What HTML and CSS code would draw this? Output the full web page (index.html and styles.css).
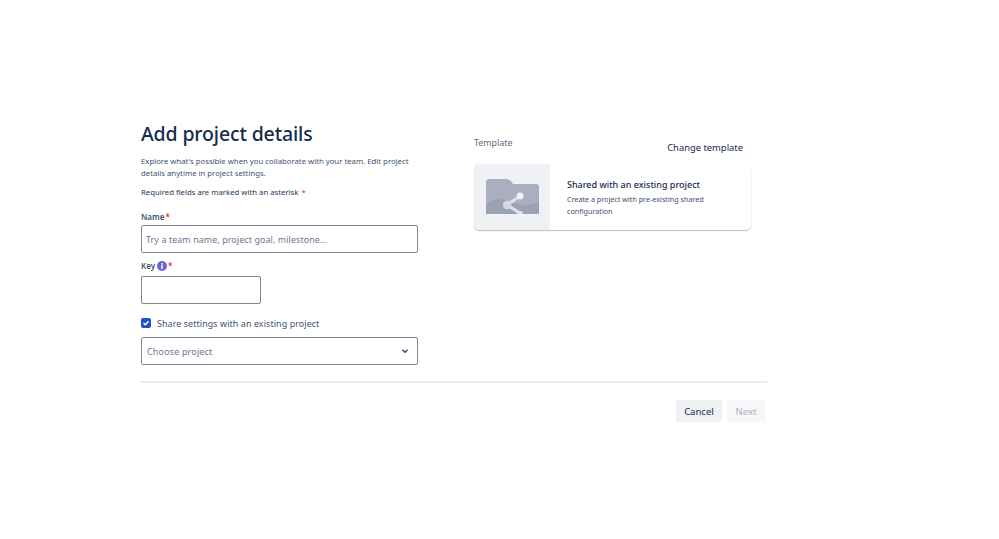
FILE: index.html
```html
<!DOCTYPE html>
<html lang="en">
<head>
<meta charset="utf-8">
<title>Add project details</title>
<link rel="stylesheet" href="styles.css">
</head>
<body>
<main class="page">
  <div class="columns">
    <form class="form">
      <h1 class="title">Add project details</h1>
      <p class="intro">Explore what's possible when you collaborate with your team. Edit project details anytime in project settings.</p>
      <p class="required">Required fields are marked with an asterisk <span class="star star-gap">*</span></p>
      <label class="label label-name">Name<span class="star">*</span></label>
      <div class="input input-wide"><span class="placeholder">Try a team name, project goal, milestone...</span></div>
      <div class="label label-key">Key
        <svg class="info" width="10" height="10" viewBox="0 0 10 10"><circle cx="5" cy="5" r="5" fill="#6f63d6"/><rect x="4.2" y="4.2" width="1.6" height="3.6" fill="#fff"/><rect x="4.2" y="2.2" width="1.6" height="1.4" fill="#fff"/></svg><span class="star">*</span>
      </div>
      <div class="input input-key"></div>
      <div class="check-row">
        <svg class="check" width="10" height="10" viewBox="0 0 10 10"><rect width="10" height="10" rx="2" fill="#2250c8"/><path d="M2.6 5.1 4.3 6.8 7.5 3.3" fill="none" stroke="#fff" stroke-width="1.4"/></svg>
        <span>Share settings with an existing project</span>
      </div>
      <div class="input input-wide select">
        <span class="placeholder placeholder-select">Choose project</span>
        <svg width="10" height="10" viewBox="0 0 10 10"><path d="M2.4 3.8 5 6.2 7.6 3.8" fill="none" stroke="#344563" stroke-width="1.4"/></svg>
      </div>
    </form>
    <section class="template">
      <div class="template-head">
        <span class="template-label">Template</span>
        <span class="change">Change template</span>
      </div>
      <div class="card">
        <div class="card-art">
          <svg width="53" height="35" viewBox="0 0 53 35">
            <path d="M0 3a3 3 0 0 1 3-3h17c3 0 5 2 7 5h23a3 3 0 0 1 3 3v27H0z" fill="#a9afbf"/>
            <path d="M0 26c6-6 13-8 20-5 10 5 22 7 33 2v12H0z" fill="#9ba2b4"/>
            <path d="M34 17 21 26 34 34" fill="none" stroke="#dfe1e7" stroke-width="3"/>
            <circle cx="34" cy="17" r="3.4" fill="#f1f2f5"/>
            <circle cx="21" cy="26" r="4.2" fill="#d5d8e0"/>
            <path d="M31 35a3 3 0 0 1 6 0z" fill="#e3e5ea"/>
          </svg>
        </div>
        <div class="card-body">
          <div class="card-title">Shared with an existing project</div>
          <div class="card-desc">Create a project with pre-existing shared configuration</div>
        </div>
      </div>
    </section>
  </div>
  <footer class="footer">
    <button class="btn cancel" type="button">Cancel</button>
    <button class="btn next" type="button" disabled>Next</button>
  </footer>
</main>
</body>
</html>
```

FILE: styles.css
```css
* { box-sizing: border-box; }
html, body { margin: 0; background: #fff; }
body { font-family: "Noto Sans", "Open Sans", sans-serif; color: #172b4d; }
.page { width: 626px; margin-left: 141px; padding-top: 121px; }
.columns { display: flex; gap: 56px; height: 262px; border-bottom: 2px solid #ebecf0; }
.form { width: 277px; }
.title { margin: 0; font-size: 19.5px; line-height: 26px; font-weight: 500; color: #172b4d; letter-spacing: -.15px; }
.intro { margin: 8px 0 0; font-size: 7.75px; line-height: 12px; color: #42526e; }
.required { margin: 7px 0 0; font-size: 7.75px; line-height: 12px; color: #253858; }
.star { color: #de350b; }
.star-gap { margin-left: 1px; }
.label { font-size: 8px; line-height: 12px; font-weight: 600; color: #42526e; display: flex; align-items: center; gap: 1px; }
.label-name { margin-top: 13px; }
.label-key { margin-top: 7px; }
.info { margin-left: 1px; }
.input { height: 28px; border: 1px solid #7a869a; border-radius: 2px; margin-top: 2px; display: flex; align-items: center; background: #fff; }
.input-wide { width: 277px; padding: 0 4px; }
.input-key { width: 120px; margin-top: 4px; }
.placeholder { font-size: 8.9px; color: #6b778c; letter-spacing: .1px; }
.placeholder-select { font-size: 9.1px; }
.select { justify-content: space-between; padding: 0 7px 0 5px; margin-top: 8px; }
.check-row { display: flex; align-items: center; gap: 6px; margin-top: 13px; height: 12px; font-size: 8.9px; color: #42526e; letter-spacing: .1px; }
.check { flex: none; }
.template { width: 293px; padding-top: 13px; }
.template-head { display: flex; justify-content: space-between; height: 30px; padding-right: 24px; }
.template-label { font-size: 8.9px; line-height: 18px; color: #5e6c84; }
.change { font-size: 9.4px; line-height: 18px; color: #172b4d; margin-top: 5px; }
.card { display: flex; width: 277px; height: 66px; border-radius: 5px; overflow: hidden; box-shadow: 0 1px 1px rgba(9,30,66,.28), 0 0 1px rgba(9,30,66,.1); }
.card-art { flex: none; width: 76px; background: #f0f1f4; display: flex; align-items: flex-end; padding: 0 0 16px 12px; }
.card-body { padding: 14px 16px 0 17px; }
.card-title { font-size: 9px; line-height: 13px; font-weight: 500; color: #172b4d; }
.card-desc { margin-top: 2px; font-size: 7.2px; line-height: 12px; color: #42526e; }
.footer { display: flex; justify-content: flex-end; gap: 5px; padding: 17px 2px 0 0; }
.btn { height: 22px; border: 0; border-radius: 2px; font: 500 9.4px "Noto Sans", sans-serif; padding: 0; }
.cancel { width: 46px; background: #f0f1f4; color: #344563; }
.next { width: 38px; background: #f6f7f8; color: #b3b9c4; }
```
